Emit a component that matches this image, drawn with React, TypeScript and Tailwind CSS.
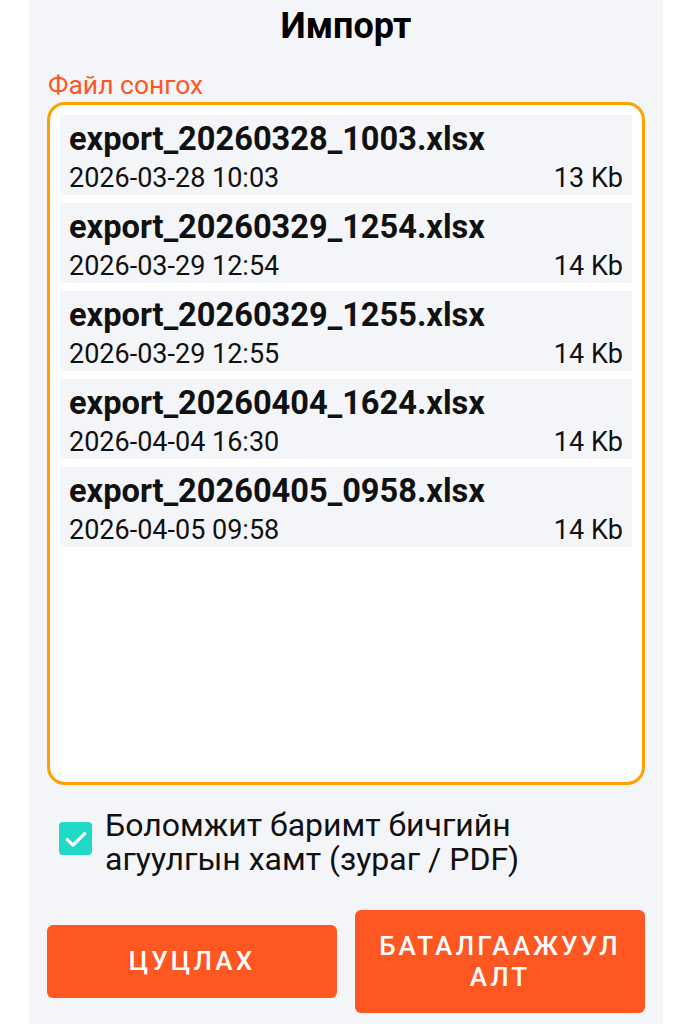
import React from "react";

type FileRow = { name: string; date: string; size: string };

const files: FileRow[] = [
  { name: "export_20260328_1003.xlsx", date: "2026-03-28 10:03", size: "13 Kb" },
  { name: "export_20260329_1254.xlsx", date: "2026-03-29 12:54", size: "14 Kb" },
  { name: "export_20260329_1255.xlsx", date: "2026-03-29 12:55", size: "14 Kb" },
  { name: "export_20260404_1624.xlsx", date: "2026-04-04 16:30", size: "14 Kb" },
  { name: "export_20260405_0958.xlsx", date: "2026-04-05 09:58", size: "14 Kb" },
];

function CheckMark() {
  return (
    <svg width="26" height="26" viewBox="0 0 24 24" fill="none">
      <path d="M4 12.5l5.2 5.2L20 7" stroke="#ffffff" strokeWidth="3" strokeLinecap="round" strokeLinejoin="round" />
    </svg>
  );
}

export default function App() {
  return (
    <div className="w-[692px] h-[1024px] bg-white font-['Roboto',sans-serif] overflow-hidden">
      <div className="ml-[29px] w-[634px] h-[1024px] bg-[#f4f5f9] px-[18px] flex flex-col">
        <div className="h-[52px] flex items-center justify-center text-[36px] font-bold text-black">
          Импорт
        </div>

        <div className="mt-[18px] h-[30px] leading-[30px] pl-[1px] text-[26.5px] text-[#ff5722]">
          Файл сонгох
        </div>

        <div className="mt-[2px] h-[683px] border-[3px] border-[#ffa000] rounded-[18px] bg-white px-[10px] pt-[10px] flex flex-col gap-[8px]">
          {files.map((f) => (
            <div key={f.name} className="h-[80px] bg-[#f4f5f9] px-[9px] pt-[5px] flex flex-col">
              <div className="text-[32.6px] leading-[38px] font-bold text-[#111]">{f.name}</div>
              <div className="flex justify-between text-[27px] leading-[40px] text-[#111]">
                <span>{f.date}</span>
                <span>{f.size}</span>
              </div>
            </div>
          ))}
        </div>

        <div className="mt-[23px] flex items-start pl-[12px] gap-[13px]">
          <div className="mt-[14px] w-[33px] h-[33px] rounded-[4px] bg-[#20d9c7] flex items-center justify-center shrink-0">
            <CheckMark />
          </div>
          <div className="text-[32px] leading-[34px] text-[#111]">
            Боломжит баримт бичгийн
            <br />
            агуулгын хамт (зураг / PDF)
          </div>
        </div>

        <div className="mt-[34px] flex items-center gap-[18px]">
          <button className="w-[290px] h-[73px] rounded-[6px] bg-[#ff5722] text-white text-[26px] font-medium tracking-[0.12em] flex items-center justify-center">
            ЦУЦЛАХ
          </button>
          <button className="w-[290px] h-[103px] rounded-[6px] bg-[#ff5722] text-white text-[26px] font-medium tracking-[0.12em] leading-[31px] px-[20px] flex items-center justify-center text-center">
            БАТАЛГААЖУУЛ АЛТ
          </button>
        </div>
      </div>
    </div>
  );
}
